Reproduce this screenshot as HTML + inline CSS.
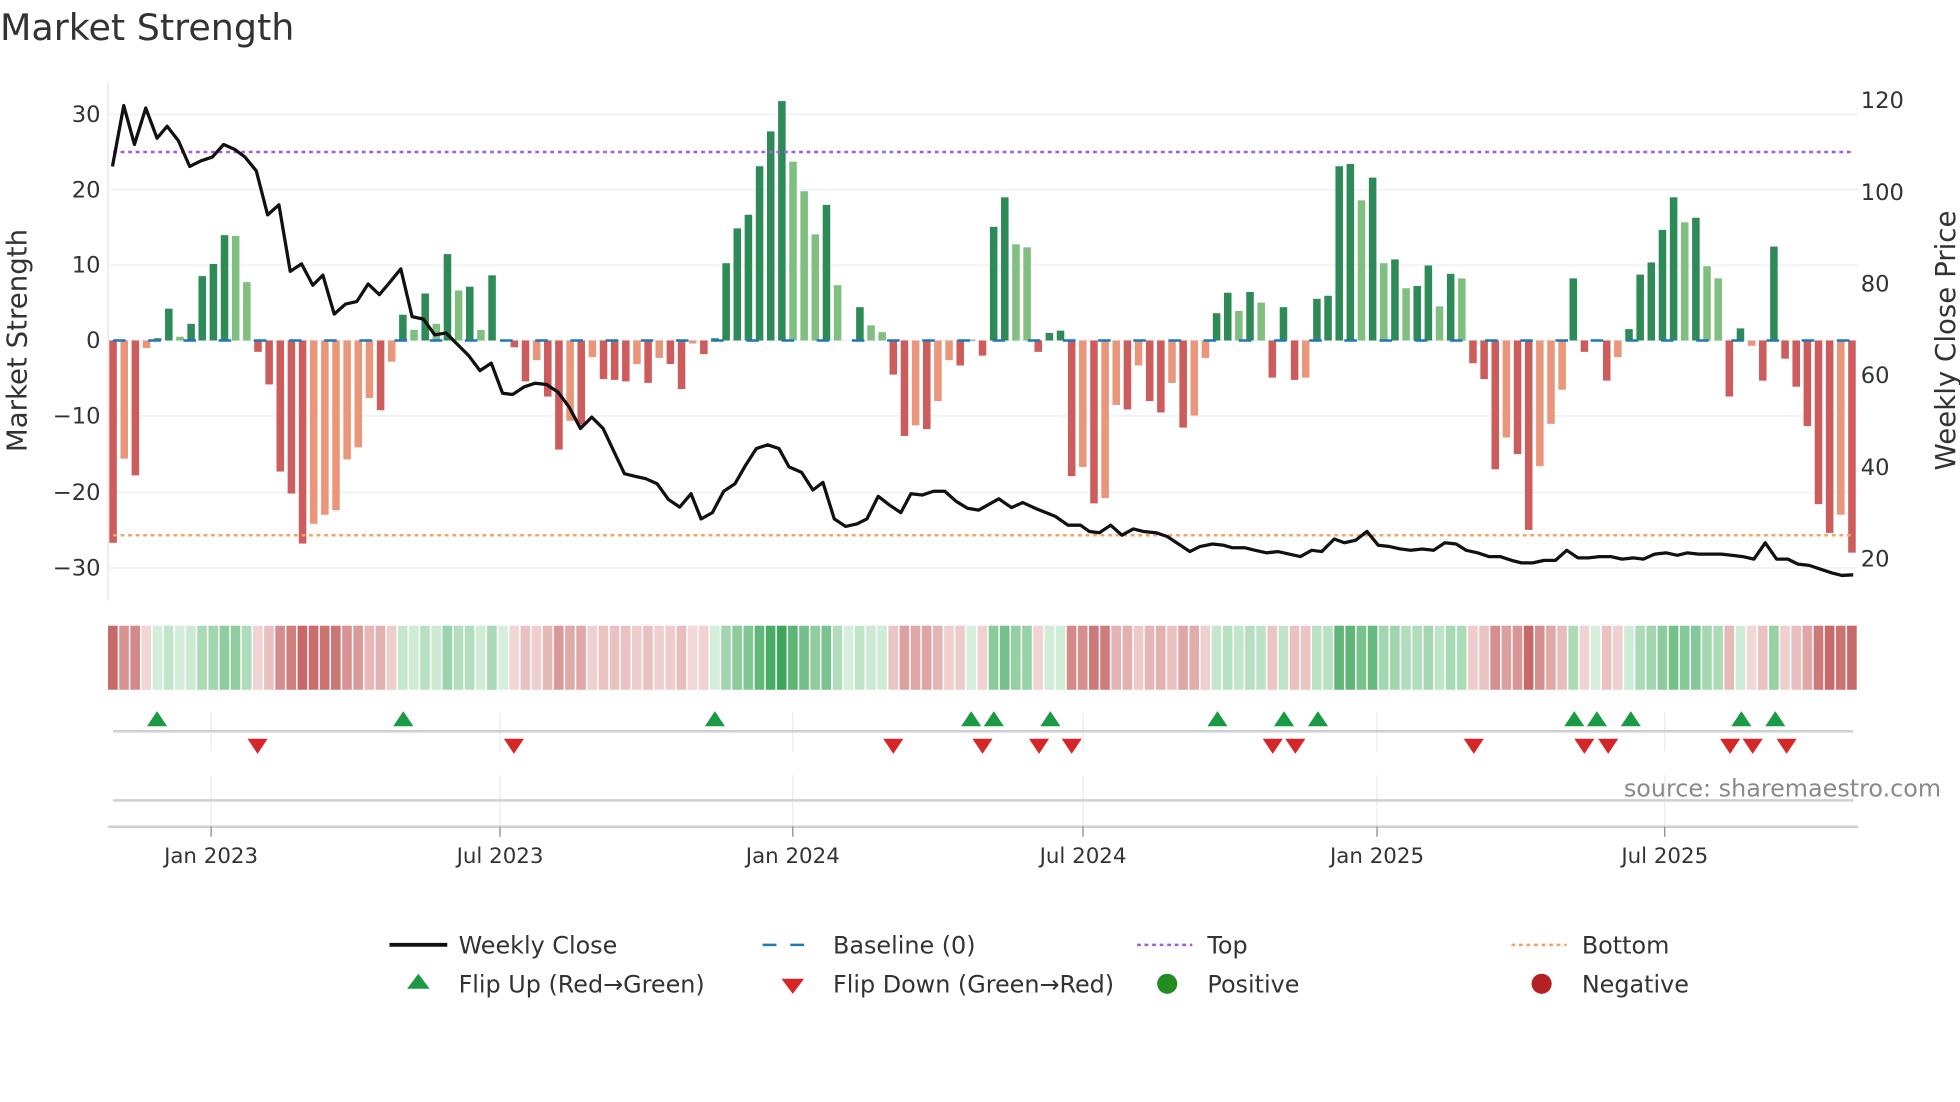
<!DOCTYPE html>
<html><head><meta charset="utf-8"><style>
html,body{margin:0;padding:0;background:#fff;}
svg{display:block;}
text{font-family:"DejaVu Sans","Liberation Sans",sans-serif;fill:#333;}
</style></head><body>
<svg id="s" width="1960" height="1102" viewBox="0 0 1560 877.1" xmlns="http://www.w3.org/2000/svg">
<rect width="1560" height="877.1" fill="#fff"/>
<text x="0" y="32" font-size="29">Market Strength</text>
<g id="grid"></g>
<line x1="86" y1="65" x2="86" y2="478" stroke="#e6e6e6" stroke-width="1"/>
<g id="bars"></g>
<line x1="90" y1="271" x2="1476" y2="271" stroke="#1f77b4" stroke-width="2" stroke-dasharray="10,18"/>
<line x1="90" y1="121" x2="1476" y2="121" stroke="#9b5fe0" stroke-width="2" stroke-dasharray="3,3"/>
<line x1="90" y1="426" x2="1476" y2="426" stroke="#f4a460" stroke-width="2" stroke-dasharray="3,3"/>
<polyline id="price" fill="none" stroke="#111" stroke-width="2.6" stroke-linejoin="round"/>
<g font-size="18" text-anchor="end">
<text x="80" y="97">30</text><text x="80" y="157">20</text><text x="80" y="217">10</text><text x="80" y="277">0</text>
<text x="80" y="337">−10</text><text x="80" y="398">−20</text><text x="80" y="458">−30</text>
</g>
<g font-size="18">
<text x="1481" y="86">120</text><text x="1481" y="159">100</text><text x="1481" y="232">80</text>
<text x="1481" y="305">60</text><text x="1481" y="378">40</text><text x="1481" y="451">20</text>
</g>
<text transform="translate(21,271) rotate(-90)" font-size="22" text-anchor="middle">Market Strength</text>
<text transform="translate(1556,271) rotate(-90)" font-size="22" text-anchor="middle">Weekly Close Price</text>
<g id="strip"></g>
<g stroke="#e8ecef" stroke-width="1">
<line x1="168" y1="567" x2="168" y2="598"/><line x1="398" y1="567" x2="398" y2="598"/><line x1="631" y1="567" x2="631" y2="598"/>
<line x1="862" y1="567" x2="862" y2="598"/><line x1="1096" y1="567" x2="1096" y2="598"/><line x1="1325" y1="567" x2="1325" y2="598"/>
<line x1="168" y1="617" x2="168" y2="658"/><line x1="398" y1="617" x2="398" y2="658"/><line x1="631" y1="617" x2="631" y2="658"/>
<line x1="862" y1="617" x2="862" y2="658"/><line x1="1096" y1="617" x2="1096" y2="658"/><line x1="1325" y1="617" x2="1325" y2="658"/>
</g>
<line x1="90" y1="582" x2="1475" y2="582" stroke="#d0d0d0" stroke-width="2"/>
<line x1="90" y1="637" x2="1475" y2="637" stroke="#d0d0d0" stroke-width="2"/>
<line x1="86" y1="658" x2="1479" y2="658" stroke="#d0d0d0" stroke-width="2"/>
<g stroke="#888" stroke-width="1">
<line x1="168" y1="658" x2="168" y2="666"/><line x1="398" y1="658" x2="398" y2="666"/><line x1="631" y1="658" x2="631" y2="666"/>
<line x1="862" y1="658" x2="862" y2="666"/><line x1="1096" y1="658" x2="1096" y2="666"/><line x1="1325" y1="658" x2="1325" y2="666"/>
</g>
<g id="marks"></g>
<text x="1545" y="634" font-size="19" text-anchor="end" style="fill:#8a8a8a">source: sharemaestro.com</text>
<g font-size="17" text-anchor="middle">
<text x="168" y="687">Jan 2023</text><text x="398" y="687">Jul 2023</text><text x="631" y="687">Jan 2024</text>
<text x="862" y="687">Jul 2024</text><text x="1096" y="687">Jan 2025</text><text x="1325" y="687">Jul 2025</text>
</g>
<g font-size="19">
<line x1="310" y1="752" x2="356" y2="752" stroke="#111" stroke-width="3"/>
<text x="365" y="759">Weekly Close</text>
<line x1="607" y1="752" x2="651" y2="752" stroke="#1f77b4" stroke-width="2" stroke-dasharray="11,11"/>
<text x="663" y="759">Baseline (0)</text>
<line x1="905" y1="752" x2="949" y2="752" stroke="#9b5fe0" stroke-width="2" stroke-dasharray="3,3"/>
<text x="961" y="759">Top</text>
<line x1="1203" y1="752" x2="1247" y2="752" stroke="#f4a460" stroke-width="2" stroke-dasharray="3,3"/>
<text x="1259" y="759">Bottom</text>
<polygon points="333,775 342,787 324,787" fill="#1a9a45"/>
<text x="365" y="790">Flip Up (Red→Green)</text>
<polygon points="622,779 640,779 631,791" fill="#d62728"/>
<text x="663" y="790">Flip Down (Green→Red)</text>
<circle cx="929" cy="783" r="8" fill="#228b22"/>
<text x="961" y="790">Positive</text>
<circle cx="1227" cy="783" r="8" fill="#b22222"/>
<text x="1259" y="790">Negative</text>
</g>
</svg>
<script>
var NS="http://www.w3.org/2000/svg";
function el(p,t,a){var e=document.createElementNS(NS,t);for(var k in a)e.setAttribute(k,a[k]);p.appendChild(e);return e;}
var g=document.getElementById('grid');
[91,151,211,271,331,392,452].forEach(function(y){el(g,'line',{x1:86,y1:y,x2:1479,y2:y,stroke:'#eef0f4','stroke-width':1.2});});
var B=[[-26.7,0],[-15.6,1],[-17.8,0],[-1,1],[0.3,0],[4.2,0],[0.5,1],[2.2,0],[8.5,0],[10.1,0],[13.9,0],[13.8,1],[7.7,1],[-1.5,0],[-5.8,0],[-17.3,0],[-20.2,0],[-26.8,0],[-24.2,1],[-23,1],[-22.4,1],[-15.7,1],[-14.1,1],[-7.6,1],[-9.2,0],[-2.8,1],[3.4,0],[1.4,1],[6.2,0],[2.2,1],[11.4,0],[6.6,1],[7.1,0],[1.4,1],[8.6,0],[0,0],[-0.9,0],[-5.4,0],[-2.6,1],[-7.4,0],[-14.4,0],[-10.6,1],[-11.1,0],[-2.2,1],[-5.1,0],[-5.2,0],[-5.4,0],[-3.1,1],[-5.6,0],[-2.3,1],[-3.1,0],[-6.4,0],[-0.4,1],[-1.8,0],[0.3,0],[10.2,0],[14.8,0],[16.6,0],[23,0],[27.6,0],[31.6,0],[23.6,1],[19.7,1],[14,1],[17.9,0],[7.3,1],[0,0],[4.4,0],[2,1],[1.1,1],[-4.5,0],[-12.6,0],[-11.2,1],[-11.7,0],[-8,1],[-2.6,1],[-3.3,0],[0.1,0],[-2,0],
[15,0],[18.9,0],[12.7,1],[12.3,1],[-1.5,0],[1,0],[1.3,0],[-17.9,0],[-16.7,1],[-21.5,0],[-20.8,1],[-8.5,1],[-9.1,0],[-3.3,1],[-8,0],[-9.5,0],[-5.6,1],[-11.5,0],[-9.9,1],[-2.3,1],[3.6,0],[6.3,0],[3.9,1],[6.4,0],[5,1],[-4.9,0],[4.4,0],[-5.2,0],[-4.9,1],[5.5,0],[5.9,0],[23,0],[23.3,0],[18.5,1],[21.5,0],[10.2,1],[10.7,0],[6.9,1],[7.2,0],[9.9,0],[4.5,1],[8.8,0],[8.2,1],[-3,0],[-5.1,0],[-17,0],[-12.8,1],[-15,0],[-25,0],[-16.6,1],[-11,1],[-6.5,1],[8.2,0],[-1.5,0],[0.1,0],[-5.3,0],[-2.2,1],[1.5,0],[8.7,0],[10.3,0],[14.6,0],[18.9,0],[15.6,1],[16.2,0],[9.8,1],[8.2,1],[-7.4,0],[1.6,0],[-0.7,1],[-5.3,0],[12.4,0],[-2.4,0],[-6.1,0],[-11.3,0],[-21.6,0],[-25.4,0],[-23,1],[-28,0]];
var bg=document.getElementById('bars'),sg=document.getElementById('strip');
var step=(1474-90)/(B.length-1);
function mix(a,b,t){return 'rgb('+[0,1,2].map(function(i){return Math.round(a[i]+(b[i]-a[i])*t);}).join(',')+')';}
B.forEach(function(b,i){
 var v=b[0],x=90+i*step,h=Math.abs(v)*6.03;
 var c=v>=0?(b[1]?'#80bf7f':'#2e8b57'):(b[1]?'#e9967a':'#cd5c5c');
 if(h>0.3) el(bg,'rect',{x:x-3,y:v>=0?271-h:271,width:6,height:h,fill:c});
 var col=v>=0?mix([214,239,220],[61,166,90],Math.min(v/30,1)):mix([243,218,218],[200,105,105],Math.min(-v/25,1));
 el(sg,'rect',{x:86+i*(1393/B.length),y:498,width:1393/B.length-1.2,height:51,fill:col});
});
var P=[[89.5,132.5],[98.5,84],[107,115],[116,86],[125,110],[133,100.5],[142,112],[151,132.5],[160,128],[169,125],[178,115],[187,119],[195,125],[204,136],[213,171],[222,163],[231,216],[240,210],[249,227],[257,219],[266,250],[275,242],[284,240],[293,226],[302,234.5],[310,225],[319,214],[328,252],[337,254],[346,266.5],[355,265],[364,274],[373,283],[382,295],[391,289],[400,313],[408,314],[417,308],[426,305],[435,306],[444,312],[453,324],[462,341],[471,332],[480,341],[488,358],[497,377],[505,379],[514,381],[523,385],[532,397.5],[541,403.6],[550,393],[558,413],[567,408],[576,391],[585,385],[593,371],[602,357],[611,354],[620,357],[628,371.6],[638,376],[647,390],[655,384],[664,413],[673,419],[682,417],[690,413],[699,395],[708,402],[717,408],[725,393],[734,394],[743,391],[752,391],[761,399],[770,404.5],[779,406],[795,397],[805,404],[814,400],[825,405],[840,411],[850,418],[860,418],[867,423],[875,424],[884,418],[893,426],[902,421],[910,423],[920,424],[929,427],[938,433],[947,439],[955,435],[965,433],[974,434],[981,436],[991,436],[999,438],[1008,440],[1017,439],[1026,441],[1035,443],[1044,438],[1052,439],[1062,429],[1070,432],[1079,430],[1088,423],[1097,434],[1106,435],[1115,437],[1123,438],[1132,437],[1141,438],[1150,432],[1159,433],[1167,438],[1176,440],[1185,443],[1194,443],[1203,446],[1211,448],[1220,448],[1229,446],[1238,446],[1247,438],[1256,444],[1264,444],[1273,443],[1282,443],[1291,445],[1300,444],[1308,445],[1317,441],[1326,440],[1335,442],[1343,440],[1352,441],[1361,441],[1370,441],[1379,442],[1387,443],[1396,445],[1405,432],[1414,445],[1423,445],[1431,449],[1440,450],[1449,453],[1458,456],[1466,458],[1475,457.5]];
document.getElementById('price').setAttribute('points',P.map(function(p){return p.join(',');}).join(' '));
var mg=document.getElementById('marks');
[125,321,569,773,791,836,969,1022,1049,1253,1271,1298,1386,1413].forEach(function(x){el(mg,'polygon',{points:(x)+',566 '+(x+8)+',578 '+(x-8)+',578',fill:'#1a9a45'});});
[205,409,711,782,827,853,1013,1031,1173,1261,1280,1377,1395,1422].forEach(function(x){el(mg,'polygon',{points:(x-8)+',588 '+(x+8)+',588 '+x+',600',fill:'#d62728'});});
</script>
</body></html>
